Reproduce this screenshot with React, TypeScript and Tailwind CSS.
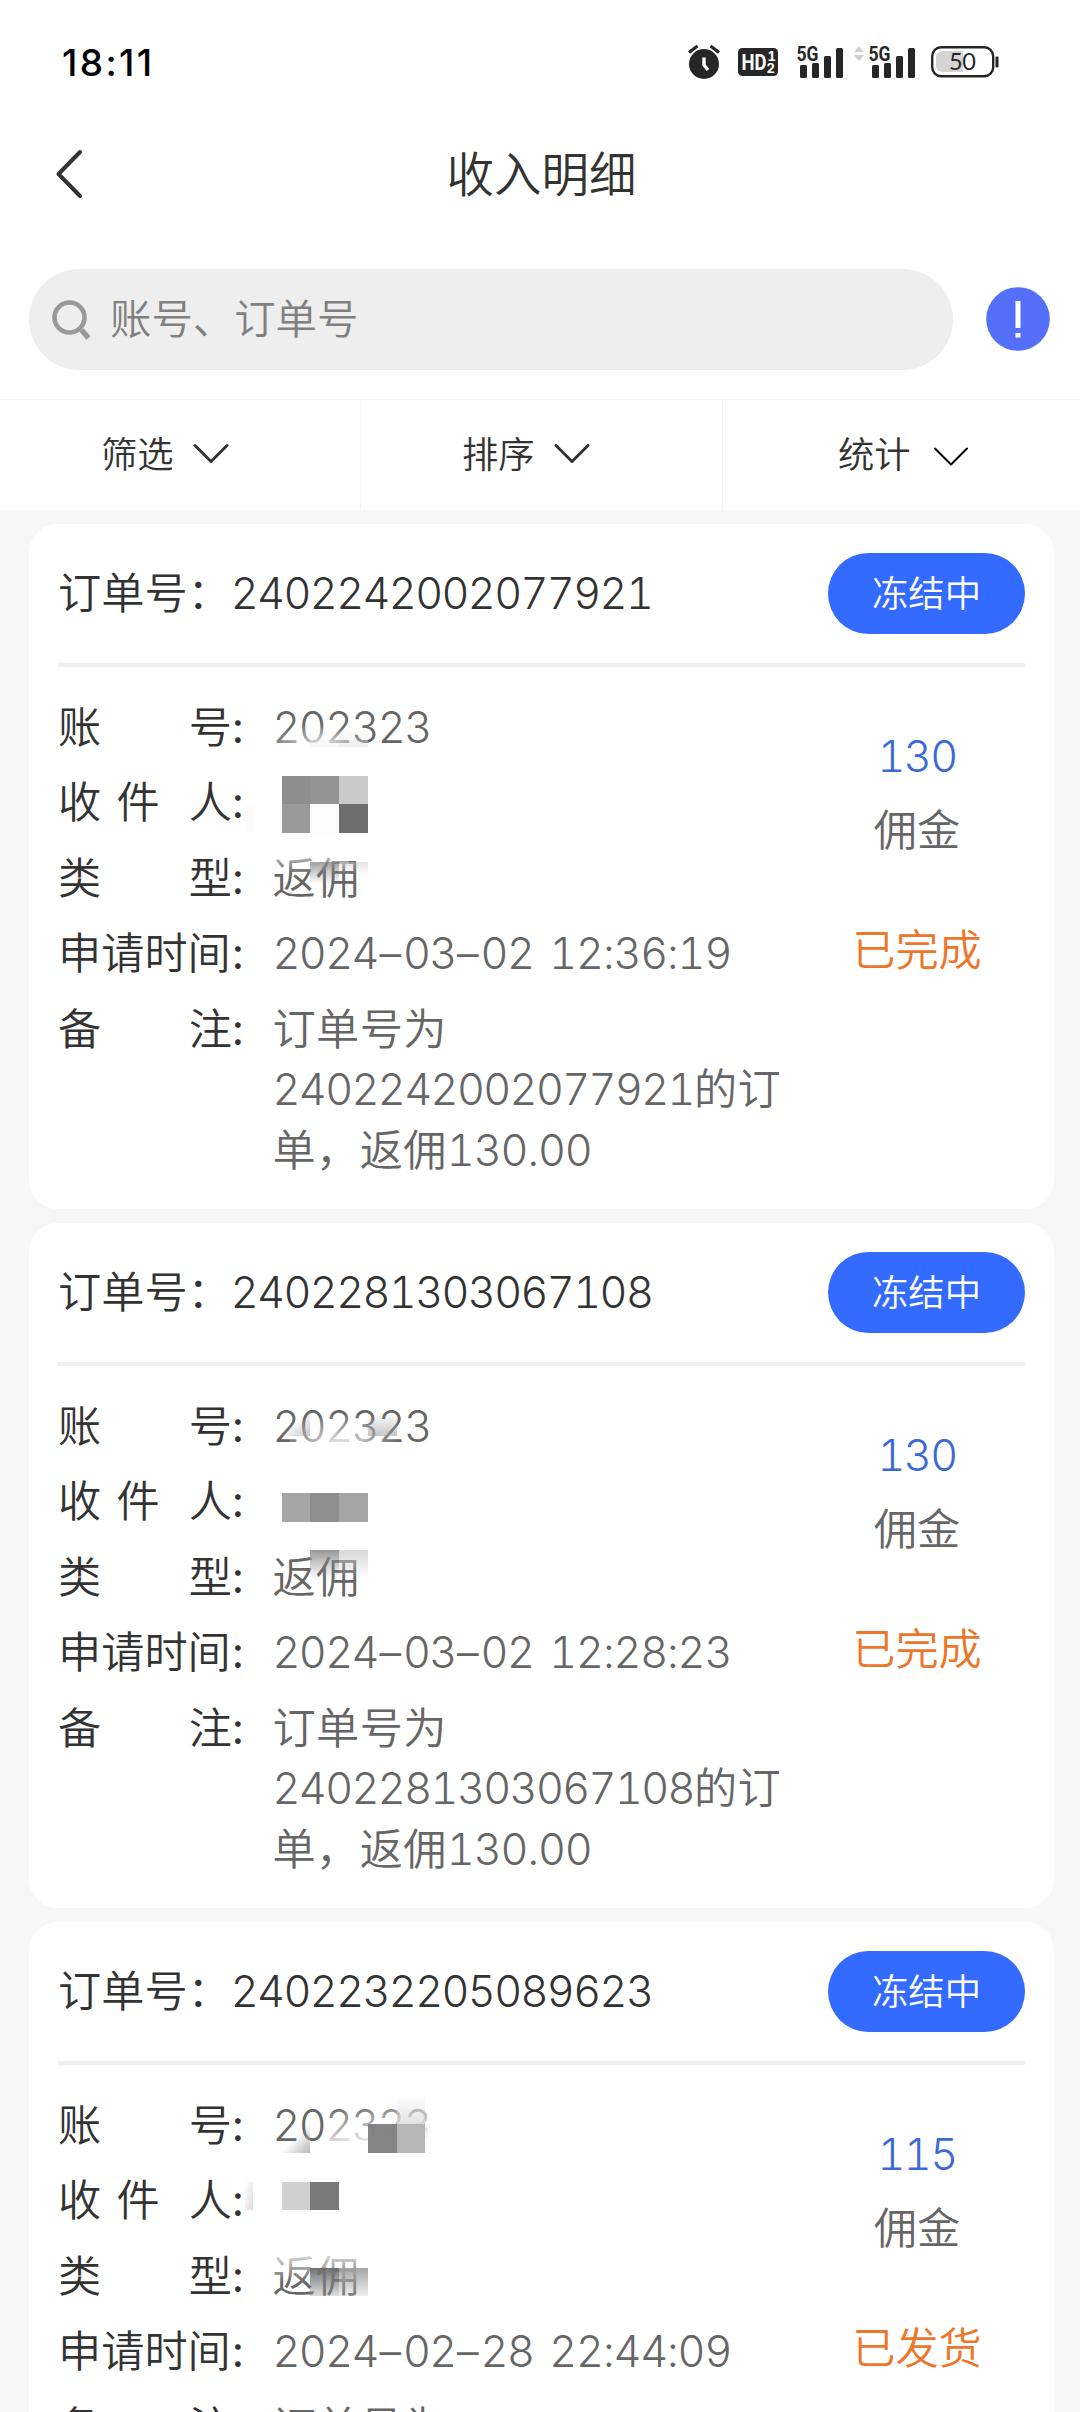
import React from 'react'

type Patch = {
  x: number
  y: number
  w: number
  h: number
  fill: string
}

type Order = {
  id: string
  account: string
  type: string
  date: string[]
  clock: string
  amount: string
  state: string
  patches: Patch[]
}

// patches are the redaction blocks, in card coordinates
const orders: Order[] = [
  {
    id: '2402242002077921',
    account: '202323',
    type: '返佣',
    date: ['2024', '03', '02'],
    clock: '12:36:19',
    amount: '130',
    state: '已完成',
    patches: [
      { x: 240, y: 190, w: 110, h: 42, fill: 'radial-gradient(ellipse 50% 80% at 42% 100%, rgba(255,255,255,1), rgba(255,255,255,0))' },
      { x: 281, y: 203, w: 29, h: 20, fill: 'linear-gradient(to bottom, rgba(248,248,248,0), rgba(240,240,240,.5))' },
      { x: 310, y: 203, w: 29, h: 20, fill: 'linear-gradient(to bottom, rgba(230,230,230,0), rgba(222,222,222,.5))' },
      { x: 217, y: 280, w: 7, h: 29, fill: '#fcfcfc' },
      { x: 253, y: 252, w: 28, h: 28, fill: '#8e8e8e' },
      { x: 281, y: 252, w: 29, h: 28, fill: '#949494' },
      { x: 310, y: 252, w: 29, h: 28, fill: '#cacaca' },
      { x: 253, y: 280, w: 28, h: 29, fill: '#9a9a9a' },
      { x: 281, y: 280, w: 29, h: 29, fill: '#fcfcfc' },
      { x: 310, y: 280, w: 29, h: 29, fill: '#6e6e6e' },
      { x: 245, y: 330, w: 75, h: 20, fill: 'linear-gradient(to bottom, rgba(255,255,255,.6), rgba(255,255,255,0))' },
      { x: 281, y: 338, w: 29, h: 22, fill: 'linear-gradient(to bottom, rgba(120,120,120,.7), rgba(150,150,150,0))' },
      { x: 310, y: 338, w: 29, h: 12, fill: 'linear-gradient(to bottom, rgba(200,200,200,.5), rgba(220,220,220,0))' },
    ],
  },
  {
    id: '2402281303067108',
    account: '202323',
    type: '返佣',
    date: ['2024', '03', '02'],
    clock: '12:28:23',
    amount: '130',
    state: '已完成',
    patches: [
      { x: 260, y: 184, w: 120, h: 42, fill: 'radial-gradient(ellipse 50% 85% at 42% 100%, rgba(255,255,255,1), rgba(255,255,255,0))' },
      { x: 253, y: 190, w: 28, h: 23, fill: 'linear-gradient(to bottom right, rgba(170,170,170,0) 40%, rgba(160,160,160,.6))' },
      { x: 339, y: 190, w: 29, h: 23, fill: 'linear-gradient(to bottom, rgba(170,170,170,0), rgba(160,160,160,.6))' },
      { x: 253, y: 270, w: 28, h: 29, fill: '#a6a6a6' },
      { x: 281, y: 270, w: 29, h: 29, fill: '#8f8f8f' },
      { x: 310, y: 270, w: 29, h: 29, fill: '#a6a6a6' },
      { x: 281, y: 327, w: 29, h: 28, fill: 'linear-gradient(to bottom, rgba(140,140,140,.9), rgba(170,170,170,0))' },
      { x: 310, y: 327, w: 29, h: 28, fill: 'linear-gradient(to bottom, rgba(205,205,205,.8), rgba(225,225,225,0))' },
    ],
  },
  {
    id: '2402232205089623',
    account: '202323',
    type: '返佣',
    date: ['2024', '02', '28'],
    clock: '22:44:09',
    amount: '115',
    state: '已发货',
    patches: [
      { x: 295, y: 184, w: 110, h: 40, fill: 'linear-gradient(170deg, rgba(255,255,255,0) 5%, rgba(255,255,255,.92) 75%)' },
      { x: 253, y: 203, w: 28, h: 28, fill: 'linear-gradient(to bottom right, rgba(190,190,190,0) 45%, rgba(175,175,175,.9))' },
      { x: 339, y: 202, w: 29, h: 29, fill: 'rgba(124,124,124,.94)' },
      { x: 368, y: 173, w: 28, h: 29, fill: 'linear-gradient(to bottom, rgba(225,225,225,0), rgba(215,215,215,.7))' },
      { x: 368, y: 202, w: 28, h: 29, fill: 'rgba(178,178,178,.94)' },
      { x: 216, y: 260, w: 8, h: 28, fill: 'linear-gradient(to bottom right, rgba(230,230,230,0), rgba(220,220,220,.9))' },
      { x: 253, y: 260, w: 28, h: 28, fill: '#d0d0d0' },
      { x: 281, y: 260, w: 29, h: 28, fill: '#7a7a7a' },
      { x: 243, y: 325, w: 90, h: 36, fill: 'linear-gradient(to bottom, rgba(255,255,255,.95), rgba(255,255,255,0))' },
      { x: 281, y: 346, w: 29, h: 28, fill: 'linear-gradient(to bottom, rgba(105,105,105,.95), rgba(160,160,160,.35))' },
      { x: 310, y: 346, w: 29, h: 28, fill: 'linear-gradient(to bottom, rgba(160,160,160,.95), rgba(190,190,190,.25))' },
    ],
  },
]

const Signal = () => (
  <svg className="w-[48px] h-[34px] overflow-visible" viewBox="0 0 48 34">
    <g fill="#262626">
      <rect x="4" y="20" width="7" height="13" rx="1.5" />
      <rect x="16" y="18" width="7" height="15" rx="1.5" />
      <rect x="28" y="11" width="7" height="22" rx="1.5" />
      <rect x="40" y="3" width="7" height="30" rx="1.5" />
    </g>
    <text x="0.5" y="16.2" textLength="22" lengthAdjust="spacingAndGlyphs" fontFamily="Roboto, sans-serif" fontWeight="700" fontSize="21" fill="#262626">5G</text>
  </svg>
)

const StatusBar = () => (
  <div className="h-[125px] flex items-start justify-between pl-[62px] pr-[81px]">
    <span className="mt-[40px] text-[37px] leading-[46px] font-medium text-black tracking-[2.400px] proportional-nums">18:11</span>
    <div className="mt-[44px] flex items-center">
      <svg className="w-[32px] h-[36px]" viewBox="0 0 32 36">
        <circle cx="16" cy="20" r="15" fill="#262626" />
        <path d="M1 8.500L9.500 2M31 8.500L22.500 2" stroke="#262626" strokeWidth="3.200" />
        <path d="M16 13.500v7.500l4 5" stroke="#fff" strokeWidth="3.400" fill="none" />
      </svg>
      <svg className="ml-[18px] w-[40px] h-[28px]" viewBox="0 0 40 28">
        <rect width="40" height="28" rx="4.500" fill="#262626" />
        <text x="3.500" y="21.800" textLength="25" lengthAdjust="spacingAndGlyphs" fontFamily="Roboto, sans-serif" fontWeight="700" fontSize="22" fill="#fff">HD</text>
        <text x="29.500" y="13" fontFamily="Inter, sans-serif" fontWeight="700" fontSize="13" fill="#fff">1</text>
        <text x="28.500" y="25" fontFamily="Inter, sans-serif" fontWeight="700" fontSize="13" fill="#fff">2</text>
      </svg>
      <div className="ml-[18px] flex">
        <Signal />
      </div>
      <svg className="ml-[10px] mb-[17px] w-[10px] h-[15px]" viewBox="0 0 10 15">
        <path d="M0 6l5-6 5 6zM0 9l5 6 5-6z" fill="#d0d0d0" />
      </svg>
      <div className="ml-[4px] flex">
        <Signal />
      </div>
      <svg className="ml-[15px] w-[68px] h-[32px]" viewBox="0 0 68 32">
        <path d="M11 5h21v21H11a6 6 0 0 1-6-6v-9a6 6 0 0 1 6-6z" fill="#d4d4d4" />
        <rect x="1.200" y="1.200" width="61" height="29" rx="9" fill="none" stroke="#262626" strokeWidth="2.400" />
        <rect x="64.500" y="10.500" width="3" height="11" rx="1" fill="#262626" />
        <text x="31.500" y="24" textAnchor="middle" fontFamily="Lato, sans-serif" fontWeight="400" fontSize="23.500" textLength="27" fill="#262626">50</text>
      </svg>
    </div>
  </div>
)

const NavBar = () => (
  <div className="h-[100px] grid grid-cols-[203px_1fr_200px] items-center">
    <svg className="ml-[55px] -mt-[2px] w-[28px] h-[50px]" viewBox="0 0 28 50" fill="none" stroke="#333" strokeWidth="4" strokeLinecap="round" strokeLinejoin="round">
      <path d="M25 3L3.500 25L25 47" />
    </svg>
    <h1 className="text-center text-[47.500px] leading-[60px] text-[#333]">收入明细</h1>
  </div>
)

const SearchBar = () => (
  <div className="mt-[44px] mb-[29px] flex items-center pl-[29px] pr-[30px]">
    <div className="w-[924px] h-[101px] rounded-full bg-[#eee] flex items-center">
      <svg className="ml-[23px] w-[40px] h-[42px]" viewBox="0 0 40 42" fill="none" stroke="#999">
        <circle cx="17.500" cy="18.500" r="15" strokeWidth="4.600" />
        <path d="M29.500 31L36.500 39" strokeWidth="5.500" />
      </svg>
      <span className="ml-[18px] -mt-[2px] text-[41.400px] leading-[60px] text-[#808080]">账号、订单号</span>
    </div>
    <svg className="ml-[33px] -mt-[2px] w-[64px] h-[64px]" viewBox="0 0 64 64">
      <circle cx="32" cy="32" r="31.800" fill="#5470fb" />
      <path d="M29.500 14h5v27h-5zM29.500 46h5v4.500h-5z" fill="#fff" />
    </svg>
  </div>
)

const Chevron = ({ thin }: { thin?: boolean }) => (
  <svg className="w-[36px] h-[21px]" viewBox="0 0 36 21" fill="none" stroke={thin ? '#000' : '#333'} strokeWidth={thin ? 2 : 3} strokeLinecap="round" strokeLinejoin="round">
    <path d="M2 2.500L18 18.500L34 2.500" />
  </svg>
)

const Tabs = () => (
  <div className="h-[111px] flex border-t border-[#f5f5f5] text-[36.300px] leading-[50px] text-[#333]">
    <div className="w-[361px] flex items-center border-r border-[#f5f5f5] pl-[101px]">
      <span>筛选</span>
      <div className="ml-[19px] -mt-[4px]"><Chevron /></div>
    </div>
    <div className="w-[362px] flex items-center border-r border-[#f5f5f5] pl-[101px]">
      <span>排序</span>
      <div className="ml-[19px] -mt-[4px]"><Chevron /></div>
    </div>
    <div className="flex-1 flex items-center pl-[115px]">
      <span>统计</span>
      <div className="ml-[22px] mt-[3px]"><Chevron thin /></div>
    </div>
  </div>
)

const Num = ({ children }: { children: React.ReactNode }) => (
  <span className="tracking-[-1.600px]">{children}</span>
)

const Row = ({ label, children }: { label: React.ReactNode; children?: React.ReactNode }) => (
  <div className="flex">
    <div className="w-[214.500px] flex text-[#333]">
      <div className="w-[174px] flex justify-between">{label}</div>
      <span className="font-normal">:</span>
    </div>
    <div className="text-[#666] whitespace-nowrap tracking-[0.400px]">{children}</div>
  </div>
)

const OrderCard = ({ order }: { order: Order }) => (
  <div className="relative w-[1025px] h-[685px] shrink-0 rounded-[29px] bg-white px-[29px] text-[43.200px] leading-[60.500px]">
    <div className="h-[139px] flex items-center justify-between">
      <div className="text-[#333] whitespace-nowrap">
        订单号：<Num>{order.id}</Num>
      </div>
      <button className="w-[197px] h-[81px] rounded-full bg-[#336aff] text-white text-[36.300px] leading-[50px]">冻结中</button>
    </div>
    <div className="h-[4px] bg-[#efefef]" />
    <div className="flex justify-between">
      <div className="pt-[29.500px] flex flex-col gap-[15.100px]">
        <Row label={<><span>账</span><span>号</span></>}><Num>{order.account}</Num></Row>
        <Row label={<><span>收</span><span className="mr-[14px]">件</span><span>人</span></>} />
        <Row label={<><span>类</span><span>型</span></>}>{order.type}</Row>
        <Row label="申请时间">
          <Num>{order.date[0]}</Num>
          <span className="mx-[1.500px]">–</span>
          <Num>{order.date[1]}</Num>
          <span className="mx-[1.500px]">–</span>
          <Num>{order.date[2]}</Num>
          <span className="ml-[16px] tracking-[-1.100px]">{order.clock}</span>
        </Row>
        <Row label={<><span>备</span><span>注</span></>}>
          订单号为<br />
          <Num>{order.id}</Num>的订<br />
          单，返佣<span className="tracking-[-1.100px]">{order.amount}.00</span>
        </Row>
      </div>
      <div className="w-[216px] pt-[58.500px] text-center">
        <p className="text-[#3a6ad9]"><Num>{order.amount}</Num></p>
        <p className="mt-[14px] text-[#666]">佣金</p>
        <p className="mt-[59px] text-[#ec772b]">{order.state}</p>
      </div>
    </div>
    {order.patches.map((p, i) => (
      <div key={i} className="absolute" style={{ left: p.x, top: p.y, width: p.w, height: p.h, background: p.fill }} />
    ))}
  </div>
)

const App = () => {
  return (
    <div className="w-[1080px] h-[2412px] overflow-hidden flex flex-col bg-[#f7f7f7] font-['Inter','Noto_Sans_CJK_SC',sans-serif] font-[350] tabular-nums">
      <div className="shrink-0 bg-white">
        <StatusBar />
        <NavBar />
        <SearchBar />
        <Tabs />
      </div>
      <div className="pt-[14px] pl-[29px] flex flex-col gap-[14px]">
        {orders.map((order) => (
          <OrderCard key={order.id} order={order} />
        ))}
      </div>
    </div>
  )
}

export default App
